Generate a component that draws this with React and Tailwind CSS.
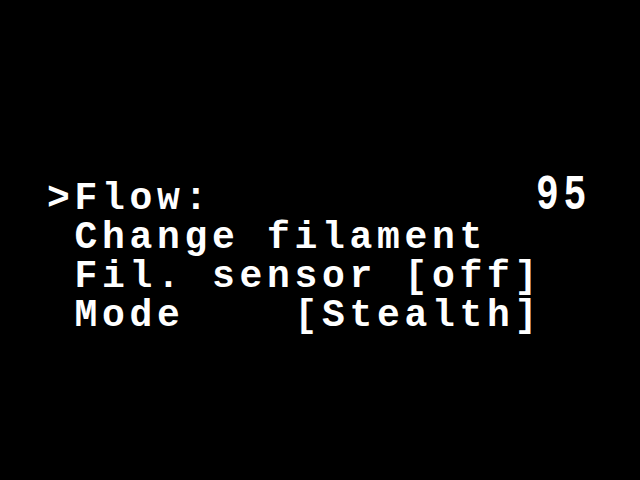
import React from 'react';

const rows = [
    { text: '>Flow:', value: '95' },
    { text: ' Change filament' },
    { text: ' Fil. sensor [off]' },
    { text: ' Mode    [Stealth]' },
];

export default function App() {
    return (
        <div className="w-[640px] h-[480px] bg-black overflow-hidden">
            <div
                className="pt-[179px] pl-[47px] text-white font-bold text-[38px] leading-[39px] tracking-[4.7px] whitespace-pre"
                style={{ fontFamily: '"Liberation Mono", "DejaVu Sans Mono", monospace' }}
            >
                {rows.map((row, i) => (
                    <div key={i} className="flex h-[39px]">
                        <span>{row.text}</span>
                        {row.value && (
                            <span className="ml-auto mr-[49px] inline-block scale-y-[1.32] origin-[50%_76%]">{row.value}</span>
                        )}
                    </div>
                ))}
            </div>
        </div>
    );
}
